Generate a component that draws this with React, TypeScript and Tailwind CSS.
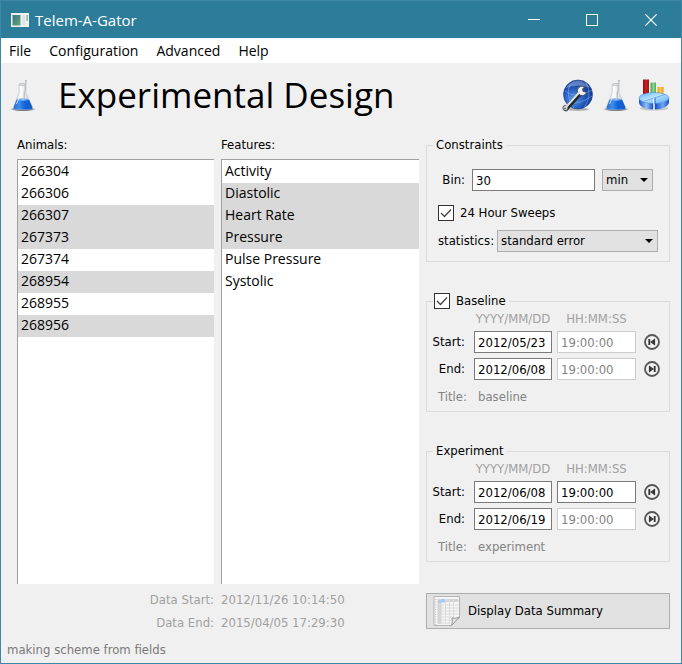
import { useId } from "react";

const ui = "font-['DejaVu_Sans_Condensed','DejaVu_Sans',sans-serif] text-[13px] leading-[20px]";
const segoe = "font-['Open_Sans','Noto_Sans',sans-serif]";

function Flask({ className }: { className: string }) {
  const id = useId();
  return (
    <svg viewBox="0 0 26 34" className={className} aria-hidden="true">
      <defs>
        <linearGradient id={id + "l"} x1="0" x2="1" y1="0" y2="0">
          <stop offset="0" stopColor="#2f6fd0" />
          <stop offset="0.3" stopColor="#3f8cea" />
          <stop offset="0.6" stopColor="#0d63dc" />
          <stop offset="1" stopColor="#1a5cc4" />
        </linearGradient>
        <linearGradient id={id + "g"} x1="0" x2="1" y1="0" y2="0">
          <stop offset="0" stopColor="#c6cacd" />
          <stop offset="0.4" stopColor="#fafbfc" />
          <stop offset="1" stopColor="#bfc3c7" />
        </linearGradient>
        <radialGradient id={id + "s"}>
          <stop offset="0" stopColor="#222" stopOpacity="0.9" />
          <stop offset="0.7" stopColor="#444" stopOpacity="0.6" />
          <stop offset="1" stopColor="#555" stopOpacity="0" />
        </radialGradient>
      </defs>
      <ellipse cx="13" cy="31.2" rx="13" ry="2.2" fill={`url(#${id}s)`} />
      <path d="M9 6.5h7v8.5l6.3 14c.5 1.4-.2 2.5-1.6 2.5H5.3c-1.4 0-2.1-1.1-1.6-2.5L9 15z" fill={`url(#${id}g)`} stroke="#b9bdc1" strokeWidth="0.6" />
      <path d="M6.5 21.5q6.5 1.5 12.5 0l3.3 7.5c.4 1.4-.2 2.4-1.6 2.4H5.3c-1.4 0-2-1-1.6-2.4z" fill={`url(#${id}l)`} />
      <ellipse cx="12.8" cy="21.5" rx="6.2" ry="1.2" fill="#6eb0f5" />
      <path d="M16 2l-2.5 20" stroke="#aaaeb2" strokeWidth="1.5" />
      <path d="M15.5 3.5l-2.3 18" stroke="#e9ebed" strokeWidth="0.7" />
      <ellipse cx="12.5" cy="6.5" rx="3.5" ry="1" fill="#e4e6e8" stroke="#a2a7ac" strokeWidth="0.6" />
      <path d="M11 9v6l-4.5 11" stroke="#fff" strokeWidth="1" fill="none" opacity="0.7" />
    </svg>
  );
}

function GlobeWrench() {
  return (
    <svg viewBox="0 0 32 34" className="h-[34px] w-[32px]" aria-hidden="true">
      <defs>
        <radialGradient id="globe" cx="0.35" cy="0.65" r="0.75">
          <stop offset="0" stopColor="#5b97e6" />
          <stop offset="0.5" stopColor="#2156b8" />
          <stop offset="1" stopColor="#122f80" />
        </radialGradient>
      </defs>
      <ellipse cx="16" cy="31.3" rx="11" ry="1.6" fill="#777" opacity="0.5" />
      <circle cx="16" cy="16.5" r="14.5" fill="url(#globe)" stroke="#1b3f92" strokeWidth="0.6" />
      <path d="M4 10Q9.500 2 16.500 2.500T28 10Q16.500 5 4 10z" fill="#9dbdec" opacity="0.5" />
      <g fill="none" stroke="#8fbdf4" strokeWidth="0.6" opacity="0.8">
        <path d="M3 13Q15 22 30 12M5 25Q18 27 30 18M8 6Q3 18 12 30M24 4Q31 17 22 30" />
      </g>
      <path d="M4 31L19 14.500" stroke="#23272c" strokeWidth="4.4" strokeLinecap="round" />
      <path
        d="M20 8.300c-2.600 0-4.600 2-4.600 4.500s2 4.700 4.600 4.700c2.200 0 3.900-1.300 4.400-3.300l-3.200-.7-.8-2.600 2.200-2c-.8-.4-1.700-.6-2.600-.6z"
        fill="#f1f2f3"
        stroke="#4a4f55"
        strokeWidth="0.9"
      />
      <circle cx="3.4" cy="30" r="2.6" fill="#d8dadc" stroke="#3f4449" strokeWidth="0.9" />
      <path d="M3.600 29.700L18 13.500" stroke="#e0e2e4" strokeWidth="2" />
      <circle cx="3.1" cy="30.4" r="0.9" fill="#5d6268" />
    </svg>
  );
}

function ChartPie() {
  return (
    <svg viewBox="0 0 32 34" className="h-[34px] w-[32px]" aria-hidden="true">
      <defs>
        <linearGradient id="red"><stop offset="0" stopColor="#8f0f0f" /><stop offset="0.5" stopColor="#c92020" /><stop offset="1" stopColor="#9a1212" /></linearGradient>
        <linearGradient id="green"><stop offset="0" stopColor="#3da04e" /><stop offset="0.5" stopColor="#8ed694" /><stop offset="1" stopColor="#4cad58" /></linearGradient>
        <linearGradient id="amber"><stop offset="0" stopColor="#f49a1c" /><stop offset="0.5" stopColor="#ffcc4d" /><stop offset="1" stopColor="#ef9018" /></linearGradient>
        <linearGradient id="pie" x1="0" x2="1" y1="0" y2="1"><stop offset="0" stopColor="#62aef3" /><stop offset="0.45" stopColor="#b8e4ff" /><stop offset="1" stopColor="#5aa9f3" /></linearGradient>
        <linearGradient id="side"><stop offset="0" stopColor="#1d55cc" /><stop offset="0.25" stopColor="#8fbdf7" /><stop offset="0.5" stopColor="#0d3fc0" /><stop offset="0.8" stopColor="#6fa8f4" /><stop offset="1" stopColor="#1848bd" /></linearGradient>
      </defs>
      <ellipse cx="16" cy="30.5" rx="14" ry="2" fill="#777" opacity="0.35" />
      <path d="M5 1.500h6V18H5z" fill="url(#red)" />
      <path d="M12.500 4.500H18V16h-5.500z" fill="url(#green)" />
      <path d="M19.500 9h6v8h-6z" fill="url(#amber)" />
      <path d="M1 20v4.500C1 28.500 7.500 31.500 16 31.500S31 28 31 24v-4.500z" fill="url(#side)" />
      <ellipse cx="16" cy="20" rx="15" ry="5.5" fill="url(#pie)" stroke="#4a8be0" strokeWidth="0.5" />
      <path d="M16 20L27 16.500M16 20L5 23.500" stroke="#5d9fe8" strokeWidth="0.8" fill="none" />
      <path d="M16 20V32" stroke="#eef4ff" strokeWidth="1.6" />
      <path d="M17 20v6" stroke="#0b38ae" strokeWidth="0.8" />
    </svg>
  );
}

function ListBox({ label, items, selected }: { label: string; items: string[]; selected: string[] }) {
  const id = useId();
  return (
    <div className="flex min-w-0 flex-col">
      <label htmlFor={id} className={`mb-1 ${ui}`}>{label}</label>
      <select
        id={id}
        multiple
        defaultValue={selected}
        className={`flex-1 appearance-none overflow-hidden rounded-none border-t border-l border-[#a0a0a0] bg-white pt-px text-[14px] text-black outline-none ${segoe}`}
      >
        {items.map((t) => (
          <option key={t} value={t} className="h-[22px] px-[3px] py-0 leading-[22px] text-black checked:bg-[linear-gradient(#d9d9d9,#d9d9d9)]">
            {t}
          </option>
        ))}
      </select>
    </div>
  );
}

function Combo({ id, label, value, options, className }: { id: string; label?: string; value: string; options: string[]; className: string }) {
  return (
    <div className={`relative ${className}`}>
      <select
        id={id}
        aria-label={label}
        defaultValue={value}
        className="block h-[22px] w-full appearance-none rounded-none border border-[#adadad] bg-[#e1e1e1] px-[3px] text-black outline-none"
      >
        {options.map((o) => <option key={o}>{o}</option>)}
      </select>
      <svg viewBox="0 0 8 4" className="pointer-events-none absolute top-[9px] right-[5px] h-1 w-2" aria-hidden="true">
        <path d="M0 0h8L4 4z" fill="#000" />
      </svg>
    </div>
  );
}

function Tick({ id, label }: { id: string; label: string }) {
  return (
    <label htmlFor={id} className="flex h-4 items-center gap-[6px]">
      <span className="relative block size-4">
        <input id={id} type="checkbox" defaultChecked className="peer block size-4 appearance-none border border-[#333] bg-white" />
        <svg viewBox="0 0 16 16" className="pointer-events-none absolute inset-0 hidden size-4 peer-checked:block" aria-hidden="true">
          <path d="M3 8l3.500 3.500L13 4.500" fill="none" stroke="#444" strokeWidth="1.3" />
        </svg>
      </span>
      {label}
    </label>
  );
}

function SkipButton({ label, forward }: { label: string; forward?: boolean }) {
  return (
    <button type="button" aria-label={label} className="justify-self-end">
      <svg viewBox="0 0 16 16" className={forward ? "block size-4" : "block size-4 -scale-x-100"} aria-hidden="true">
        <circle cx="8" cy="8" r="7" fill="#f2f2f2" stroke="#555" strokeWidth="1.8" />
        <path d="M5 4.500v7L10 8z" fill="#3c3c3c" />
        <path d="M5.500 5v6" stroke="#333" strokeWidth="1.2" />
        <path d="M10.700 5v6" stroke="#333" strokeWidth="1.8" />
      </svg>
    </button>
  );
}

function Field({ label, value, disabled }: { label: string; value: string; disabled?: boolean }) {
  return (
    <input
      aria-label={label}
      defaultValue={value}
      disabled={disabled}
      className="block h-[22px] w-full min-w-0 border border-[#7a7a7a] bg-white px-[3px] text-black outline-none disabled:border-[#cccccc] disabled:text-[#838383]"
    />
  );
}

type RangeProps = { name: string; tick?: boolean; start: string; end: string; startLocked?: boolean; title: string };

function RangeBox({ name, tick, start, end, startLocked, title }: RangeProps) {
  return (
    <fieldset className="min-w-0 border border-[#dcdcdc]">
      <legend className="ml-[6px] flex h-5 items-center px-[3px]">
        {tick ? <span className="-ml-[2px]"><Tick id={name} label={name} /></span> : name}
      </legend>
      <div className="grid grid-cols-[42px_78fr_79fr_19px] items-center gap-x-[5px] gap-y-[5px] pt-px pr-[9px] pb-[2px]">
        <span />
        <span className="text-center leading-[14px] text-[#a0a0a0]">YYYY/MM/DD</span>
        <span className="text-center leading-[14px] text-[#a0a0a0]">HH:MM:SS</span>
        <span />
        <span className="pr-1 text-right">Start:</span>
        <Field label={`${name} start date`} value={start} />
        <Field label={`${name} start time`} value="19:00:00" disabled={startLocked} />
        <SkipButton label={`${name} to first`} />
        <span className="pr-1 text-right">End:</span>
        <Field label={`${name} end date`} value={end} />
        <Field label={`${name} end time`} value="19:00:00" disabled />
        <SkipButton label={`${name} to last`} forward />
        <span className="pr-[2px] text-right leading-[24px] text-[#838383]">Title:</span>
        <span className="col-span-3 pl-1 leading-[24px] text-[#838383]">{title}</span>
      </div>
    </fieldset>
  );
}

export default function App() {
  return (
    <div className={`flex min-h-screen flex-col border border-[#3f87a6] bg-[#f0f0f0] text-black ${ui}`}>
      <header className={`flex h-[37px] items-center bg-[#2d7d9a] pl-[10px] text-white ${segoe}`}>
        <svg viewBox="0 0 18 14" className="h-[14px] w-[18px]" aria-hidden="true">
          <defs>
            <linearGradient id="pane" x1="0" x2="1" y1="0" y2="1"><stop offset="0" stopColor="#3d7187" /><stop offset="1" stopColor="#63a877" /></linearGradient>
          </defs>
          <path d="M0 0h18v14H0z" fill="#f1f3f3" />
          <path d="M1.500 2h8v10.500h-8z" fill="url(#pane)" />
          <path d="M11 2h3.500v10H11z" fill="#dfe3e5" />
          <path d="M15.500 2h1.200v6h-1.200z" fill="#66a781" />
        </svg>
        <span className="ml-[6px] flex-1 text-[15px]">Telem-A-Gator</span>
        <button type="button" aria-label="Minimize" className="flex h-full w-[58px] items-center justify-center">
          <svg viewBox="0 0 12 12" className="size-3" shapeRendering="crispEdges"><path d="M0 5.500h12" stroke="#fff" /></svg>
        </button>
        <button type="button" aria-label="Maximize" className="flex h-full w-[58px] items-center justify-center">
          <svg viewBox="0 0 12 12" className="size-3" shapeRendering="crispEdges"><path d="M.5.5h11v11H.5z" fill="none" stroke="#fff" /></svg>
        </button>
        <button type="button" aria-label="Close" className="flex h-full w-[60px] items-center justify-center">
          <svg viewBox="0 0 12 12" className="size-3"><path d="M.4.4l11.200 11.200M11.600.4L.4 11.600" stroke="#fff" strokeWidth="1.2" /></svg>
        </button>
      </header>
      <nav className={`flex h-[25px] items-center gap-[18px] bg-white px-2 text-[14px] ${segoe}`}>
        {["File", "Configuration", "Advanced", "Help"].map((m) => <button key={m} type="button">{m}</button>)}
      </nav>
      <div className="flex h-[72px] items-center pr-[11px] pl-[9px]">
        <Flask className="mb-2 h-[34px] w-[26px]" />
        <h1 className={`ml-[22px] flex-1 pb-2 text-[35px] leading-[48px] ${segoe}`}>Experimental Design</h1>
        <div className="mb-2 flex items-center gap-[9px]">
          <button type="button" aria-label="Settings"><GlobeWrench /></button>
          <button type="button" aria-label="Experiment"><Flask className="h-[34px] w-[26px]" /></button>
          <button type="button" aria-label="Charts"><ChartPie /></button>
        </div>
      </div>
      <main className="grid flex-1 grid-cols-[402fr_244fr] gap-[7px] pr-[11px] pl-4">
        <div className="flex min-w-0 flex-col pb-[3px]">
          <div className="grid flex-1 grid-cols-[197fr_198fr] gap-[7px]">
            <ListBox
              label="Animals:"
              items={["266304", "266306", "266307", "267373", "267374", "268954", "268955", "268956"]}
              selected={["266307", "267373", "268954", "268956"]}
            />
            <ListBox
              label="Features:"
              items={["Activity", "Diastolic", "Heart Rate", "Pressure", "Pulse Pressure", "Systolic"]}
              selected={["Diastolic", "Heart Rate", "Pressure"]}
            />
          </div>
          <dl className="mt-1 grid grid-cols-[197fr_198fr] gap-x-[7px] leading-[23px] text-[#a0a0a0]">
            <dt className="text-right">Data Start:</dt>
            <dd>2012/11/26 10:14:50</dd>
            <dt className="text-right">Data End:</dt>
            <dd>2015/04/05 17:29:30</dd>
          </dl>
        </div>
        <div className="flex min-w-0 flex-col gap-[29px] pb-2">
          <fieldset className="min-w-0 border border-[#dcdcdc]">
            <legend className="ml-[6px] h-5 px-[3px]">Constraints</legend>
            <div className="flex flex-col px-[11px] pt-[14px] pb-[9px]">
              <div className="flex items-center gap-[7px] pr-[5px]">
                <label htmlFor="bin" className="w-[27px] text-right">Bin:</label>
                <input id="bin" defaultValue="30" className="h-[22px] min-w-0 flex-1 border border-[#7a7a7a] bg-white px-[3px] outline-none" />
                <Combo id="unit" label="Bin unit" value="min" options={["sec", "min", "hour"]} className="w-[51px]" />
              </div>
              <div className="mt-[14px]"><Tick id="sweeps" label="24 Hour Sweeps" /></div>
              <div className="mt-[9px] flex items-center gap-[3px]">
                <label htmlFor="stats">statistics:</label>
                <Combo id="stats" value="standard error" options={["standard error", "standard deviation"]} className="flex-1" />
              </div>
            </div>
          </fieldset>
          <RangeBox name="Baseline" tick start="2012/05/23" end="2012/06/08" startLocked title="baseline" />
          <RangeBox name="Experiment" start="2012/06/08" end="2012/06/19" title="experiment" />
          <button type="button" className="mt-auto flex h-9 items-center gap-[7px] border border-[#adadad] bg-[#e1e1e1] pl-[6px]">
            <svg viewBox="0 0 28 32" className="h-8 w-7" aria-hidden="true">
              <path d="M1 1.500h25.500V22l-8 8.500H1z" fill="#f5f5f5" stroke="#b5b5b5" />
              <path d="M4.500 4h21v3h-21z" fill="#d4d4d4" />
              <path d="M4.500 7h4v22h-4z" fill="#d2d2d2" />
              <path d="M5 5.500h7v2H5z" fill="#a9c9f8" />
              <path d="M8 4h5v2H8z" fill="#a9c9f8" />
              <path d="M4.500 10h21M4.500 13h21M4.500 16h21M4.500 19h21M4.500 22h17M4.500 25h15M4.500 28h13M12.500 4v25M16.500 4v25M20.500 4v20" stroke="#dcdcdc" fill="none" />
              <path d="M2.700 4v26" stroke="#bdbdbd" strokeDasharray="1 1.5" />
              <path d="M18.500 30.500q1.500-4 .5-7.500 4 1 7.500-1z" fill="#e4e4e4" stroke="#9a9a9a" />
            </svg>
            Display Data Summary
          </button>
        </div>
      </main>
      <footer className="h-[26px] px-[6px] leading-[26px] text-[#7a7a7a]">making scheme from fields</footer>
    </div>
  );
}
